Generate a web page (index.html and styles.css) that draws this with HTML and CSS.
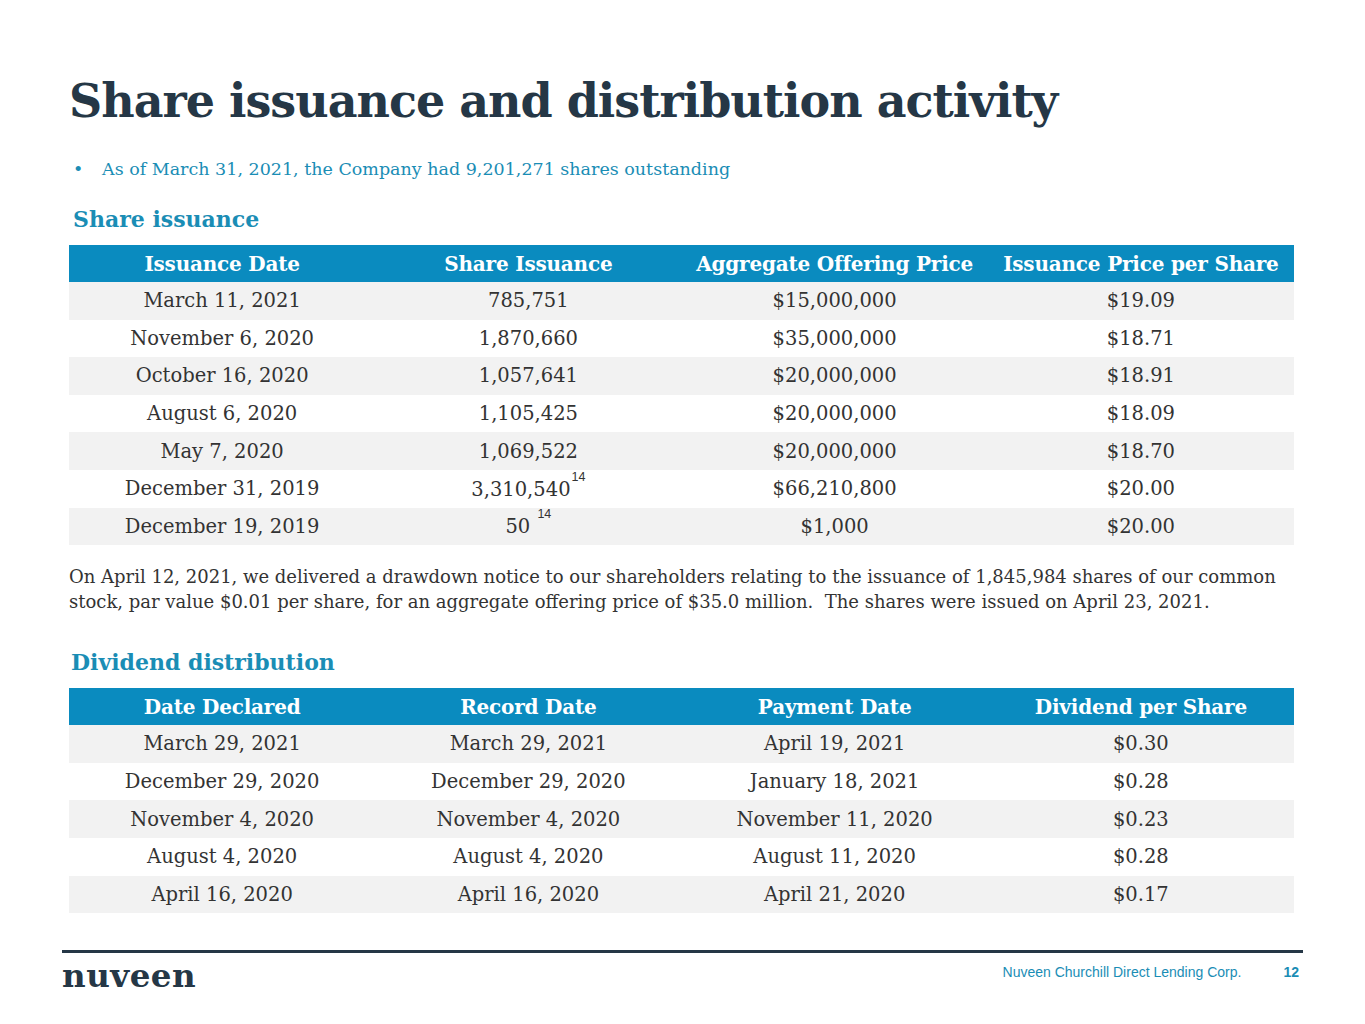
FILE: index.html
```html
<!DOCTYPE html>
<html>
<head>
<meta charset="utf-8">
<link rel="stylesheet" href="styles.css">
</head>
<body>
<div class="slide">
  <h1 class="title">Share issuance and distribution activity</h1>
  <ul class="bullets">
    <li>As of March 31, 2021, the Company had 9,201,271 shares outstanding</li>
  </ul>
  <h2 class="section">Share issuance</h2>
  <table class="data">
    <thead>
      <tr><th>Issuance Date</th><th>Share Issuance</th><th>Aggregate Offering Price</th><th>Issuance Price per Share</th></tr>
    </thead>
    <tbody>
      <tr><td>March 11, 2021</td><td>785,751</td><td>$15,000,000</td><td>$19.09</td></tr>
      <tr><td>November 6, 2020</td><td>1,870,660</td><td>$35,000,000</td><td>$18.71</td></tr>
      <tr><td>October 16, 2020</td><td>1,057,641</td><td>$20,000,000</td><td>$18.91</td></tr>
      <tr><td>August 6, 2020</td><td>1,105,425</td><td>$20,000,000</td><td>$18.09</td></tr>
      <tr><td>May 7, 2020</td><td>1,069,522</td><td>$20,000,000</td><td>$18.70</td></tr>
      <tr><td>December 31, 2019</td><td>3,310,540<sup class="fn">14</sup></td><td>$66,210,800</td><td>$20.00</td></tr>
      <tr><td>December 19, 2019</td><td>50 <sup class="fn">14</sup></td><td>$1,000</td><td>$20.00</td></tr>
    </tbody>
  </table>
  <p class="note">On April 12, 2021, we delivered a drawdown notice to our shareholders relating to the issuance of 1,845,984 shares of our common stock, par value $0.01 per share, for an aggregate offering price of $35.0 million.&nbsp; The shares were issued on April 23, 2021.</p>
  <h2 class="section section-2">Dividend distribution</h2>
  <table class="data">
    <thead>
      <tr><th>Date Declared</th><th>Record Date</th><th>Payment Date</th><th>Dividend per Share</th></tr>
    </thead>
    <tbody>
      <tr><td>March 29, 2021</td><td>March 29, 2021</td><td>April 19, 2021</td><td>$0.30</td></tr>
      <tr><td>December 29, 2020</td><td>December 29, 2020</td><td>January 18, 2021</td><td>$0.28</td></tr>
      <tr><td>November 4, 2020</td><td>November 4, 2020</td><td>November 11, 2020</td><td>$0.23</td></tr>
      <tr><td>August 4, 2020</td><td>August 4, 2020</td><td>August 11, 2020</td><td>$0.28</td></tr>
      <tr><td>April 16, 2020</td><td>April 16, 2020</td><td>April 21, 2020</td><td>$0.17</td></tr>
    </tbody>
  </table>
  <footer class="footer">
    <div class="logo">nuveen</div>
    <div class="foot-right">
      <span class="company">Nuveen Churchill Direct Lending Corp.</span>
      <span class="page">12</span>
    </div>
  </footer>
</div>
</body>
</html>
```

FILE: styles.css
```css
html, body {
  margin: 0;
  padding: 0;
  background: #ffffff;
}

.slide {
  width: 1365px;
  height: 1024px;
  box-sizing: border-box;
  padding: 0 71px 0 69px;
  font-family: "DejaVu Serif", "Liberation Serif", serif;
  color: #333333;
  position: relative;
}

.title {
  margin: 0;
  padding-top: 70px;
  font-size: 46px;
  line-height: 62px;
  font-weight: bold;
  color: #253746;
  letter-spacing: -1px;
}

.bullets {
  list-style: none;
  margin: 24px 0 0 0;
  padding: 0;
}

.bullets li {
  position: relative;
  padding-left: 33px;
  font-size: 17.5px;
  line-height: 26px;
  color: #1a8db5;
}

.bullets li::before {
  content: "\2022";
  position: absolute;
  left: 4px;
  top: 0;
  color: #1a8db5;
}

.section {
  margin: 22px 0 0 4px;
  font-size: 22px;
  line-height: 30px;
  font-weight: bold;
  color: #1a8db5;
}

.section-2 {
  margin-top: 33px;
  margin-left: 2px;
}

.data {
  width: 1225px;
  border-collapse: collapse;
  table-layout: fixed;
  margin-top: 11px;
}

.data th {
  background: #0a8bbf;
  color: #ffffff;
  font-weight: bold;
  font-size: 20px;
  height: 37px;
  padding: 0;
  text-align: center;
  letter-spacing: -0.2px;
}

.data td {
  height: 37.6px;
  padding: 0;
  text-align: center;
  font-size: 19.5px;
  color: #333333;
}

.data tbody tr:nth-child(odd) td {
  background: #f2f2f2;
}

.fn {
  font-family: "Liberation Sans", Arial, sans-serif;
  font-size: 12.5px;
  vertical-align: 15px;
  line-height: 0;
  margin-left: 1px;
}

.note {
  margin: 19px 0 0 0;
  font-size: 18px;
  line-height: 25px;
  color: #333333;
}

.footer {
  position: absolute;
  left: 62px;
  right: 62px;
  top: 950px;
  border-top: 3px solid #253746;
  display: flex;
  justify-content: space-between;
  align-items: flex-start;
}

.logo {
  font-family: "DejaVu Serif", "Liberation Serif", serif;
  font-weight: bold;
  font-size: 32.5px;
  line-height: 46px;
  color: #253746;
  letter-spacing: 0.5px;
}

.foot-right {
  font-family: "Liberation Sans", Arial, sans-serif;
  font-size: 14px;
  color: #1a8db5;
  padding-top: 11px;
  padding-right: 4px;
  display: flex;
  gap: 42px;
}

.page {
  font-weight: bold;
}
```
